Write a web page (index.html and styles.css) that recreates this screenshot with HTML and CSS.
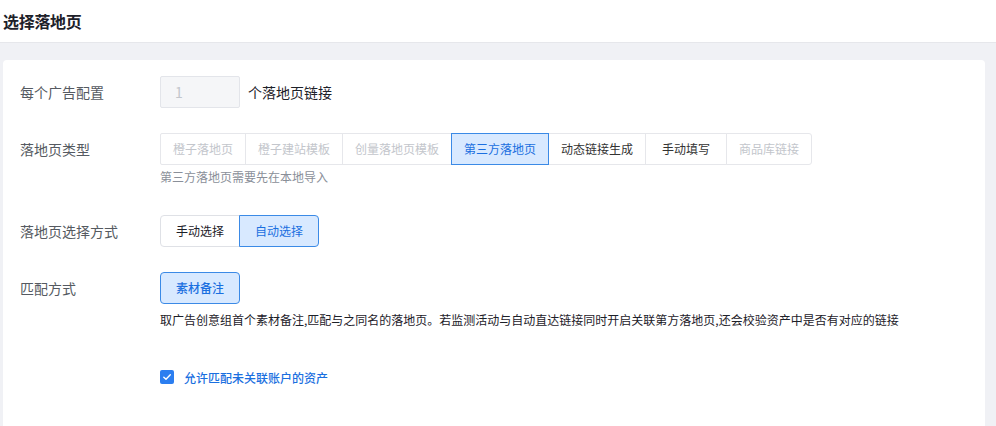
FILE: index.html
```html
<!DOCTYPE html>
<html lang="zh-CN">
<head>
<meta charset="utf-8">
<title>选择落地页</title>
<link rel="stylesheet" href="styles.css">
</head>
<body>
<header class="header"><h1 class="title">选择落地页</h1></header>
<main class="main">
  <section class="card">
    <div class="row row-count">
      <div class="label">每个广告配置</div>
      <div class="control inline">
        <div class="num-input">1</div>
        <span class="suffix">个落地页链接</span>
      </div>
    </div>
    <div class="row row-type">
      <div class="label">落地页类型</div>
      <div class="control">
        <div class="tabs">
          <span class="tab disabled">橙子落地页</span>
          <span class="tab disabled">橙子建站模板</span>
          <span class="tab disabled">创量落地页模板</span>
          <span class="tab active">第三方落地页</span>
          <span class="tab">动态链接生成</span>
          <span class="tab wide">手动填写</span>
          <span class="tab disabled">商品库链接</span>
        </div>
        <div class="help">第三方落地页需要先在本地导入</div>
      </div>
    </div>
    <div class="row row-mode">
      <div class="label">落地页选择方式</div>
      <div class="control">
        <div class="seg">
          <span class="seg-btn">手动选择</span>
          <span class="seg-btn active">自动选择</span>
        </div>
      </div>
    </div>
    <div class="row row-match">
      <div class="label">匹配方式</div>
      <div class="control">
        <span class="match-btn">素材备注</span>
        <div class="desc">取广告创意组首个素材备注,匹配与之同名的落地页。若监测活动与自动直达链接同时开启关联第方落地页,还会校验资产中是否有对应的链接</div>
        <label class="check">
          <span class="box"><svg width="10" height="10" viewBox="0 0 10 10"><path d="M1.8 5.2 L4 7.3 L8.3 2.8" fill="none" stroke="#fff" stroke-width="1.4" stroke-linecap="round" stroke-linejoin="round"/></svg></span>
          <span class="check-text">允许匹配未关联账户的资产</span>
        </label>
      </div>
    </div>
  </section>
</main>
</body>
</html>
```

FILE: styles.css
```css
* { box-sizing: border-box; }
html, body { margin: 0; padding: 0; }
body {
  background: #f0f1f5;
  font-family: "Noto Sans CJK SC", "Noto Sans", "Liberation Sans", sans-serif;
  color: #1d2129;
  height: 426px;
  overflow: hidden;
}
.header {
  height: 43px;
  background: #fff;
  border-bottom: 1px solid #e6e7eb;
  padding-left: 3px;
  display: flex;
  align-items: center;
}
.title {
  margin: 0;
  font-size: 16px;
  font-weight: 600;
  color: #1d2129;
  line-height: 40px;
  letter-spacing: -0.3px;
}
.main {
  padding: 17px 11px 0 3px;
}
.card {
  background: #fff;
  border-radius: 4px;
  padding: 16px 17px 60px 17px;
  min-height: 380px;
}
.row {
  display: flex;
  align-items: flex-start;
}
.label {
  width: 140px;
  flex: none;
  font-size: 14px;
  line-height: 32px;
  color: #555a61;
}
.control { flex: 1; }
.inline { display: flex; align-items: center; }
.row-count { margin-bottom: 25px; }
.row-type { margin-bottom: 28px; }
.row-mode { margin-bottom: 25px; }

.num-input {
  width: 80px;
  height: 32px;
  background: #f5f6f8;
  border: 1px solid #e3e5ea;
  border-radius: 2px;
  font-size: 14px;
  line-height: 30px;
  padding-left: 14px;
  color: #c2c5cc;
}
.suffix {
  margin-left: 8px;
  font-size: 14px;
  color: #1d2129;
}

.tabs { display: flex; }
.tab {
  height: 32px;
  min-width: 80px;
  padding: 0 12px;
  border: 1px solid #e6e7eb;
  margin-left: -1px;
  font-size: 12px;
  line-height: 30px;
  text-align: center;
  color: #333;
  font-weight: 400;
  background: #fff;
  position: relative;
}
.tab:first-child { margin-left: 0; border-radius: 2px 0 0 2px; }
.tab:last-child { border-radius: 0 3px 3px 0; }
.tab.disabled { color: #c3c6cc; }
.tab.wide { padding: 0 16px; }
.tab.active {
  background: #d8e9ff;
  border-color: #3b8ae6;
  color: #1a6fe0;
  z-index: 1;
}
.help {
  margin-top: 2px;
  font-size: 12px;
  line-height: 20px;
  color: #8a8f99;
}

.seg { display: flex; }
.seg-btn {
  width: 80px;
  height: 32px;
  border: 1px solid #dfe1e6;
  font-size: 12px;
  line-height: 30px;
  text-align: center;
  color: #1d2129;
  font-weight: 400;
  background: #fff;
  position: relative;
}
.seg-btn:first-child { border-radius: 4px 0 0 4px; }
.seg-btn:last-child { border-radius: 0 4px 4px 0; margin-left: -1px; }
.seg-btn.active {
  background: #d8e9ff;
  border-color: #3b8ae6;
  color: #1a6fe0;
  z-index: 1;
}

.match-btn {
  display: inline-block;
  width: 80px;
  height: 32px;
  border: 1px solid #3b8ae6;
  background: #d8e9ff;
  border-radius: 4px;
  font-size: 12px;
  line-height: 30px;
  text-align: center;
  color: #1a6fe0;
  font-weight: 500;
  vertical-align: top;
}
.desc {
  margin-top: 7px;
  font-size: 12px;
  line-height: 18px;
  color: #1d2129;
}
.check {
  margin-top: 38px;
  display: flex;
  align-items: center;
  height: 20px;
}
.box {
  width: 14px;
  height: 14px;
  border-radius: 2px;
  background: #2b7ef0;
  display: flex;
  align-items: center;
  justify-content: center;
}
.check-text {
  margin-left: 10px;
  font-size: 12px;
  color: #1a6fe0;
  font-weight: 500;
}
```
